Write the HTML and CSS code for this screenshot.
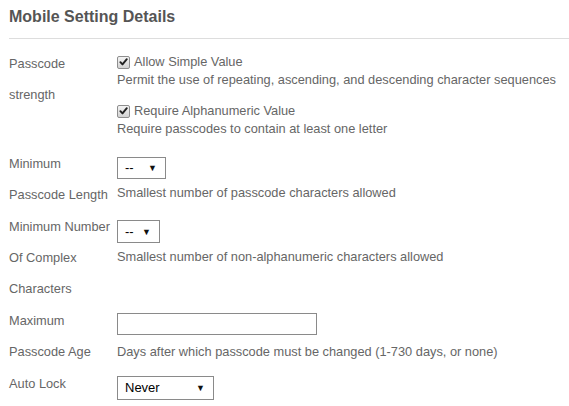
FILE: index.html
```html
<!DOCTYPE html>
<html>
<head>
<meta charset="utf-8">
<link rel="stylesheet" href="styles.css">
</head>
<body>
<div class="page">
  <h2 class="title">Mobile Setting Details</h2>
  <div class="rule"></div>
  <div class="form">
    <div class="label">Passcode<br>strength</div>
    <div class="field field-checks">
      <label class="check">
        <span class="box"><svg viewBox="0 0 12 12" width="12" height="12"><path d="M2.6 6.2 L4.9 8.6 L9.6 2.9" fill="none" stroke="#222" stroke-width="2.1" stroke-linecap="round" stroke-linejoin="round"/></svg></span>
        Allow Simple Value
      </label>
      <div class="desc">Permit the use of repeating, ascending, and descending character sequences</div>
      <label class="check check-second">
        <span class="box"><svg viewBox="0 0 12 12" width="12" height="12"><path d="M2.6 6.2 L4.9 8.6 L9.6 2.9" fill="none" stroke="#222" stroke-width="2.1" stroke-linecap="round" stroke-linejoin="round"/></svg></span>
        Require Alphanumeric Value
      </label>
      <div class="desc">Require passcodes to contain at least one letter</div>
    </div>

    <div class="label">Minimum<br>Passcode Length</div>
    <div class="field">
      <div class="select sel-min"><span>--</span><span class="arrow">▼</span></div>
      <div class="desc desc-after">Smallest number of passcode characters allowed</div>
    </div>

    <div class="label">Minimum Number<br>Of Complex<br>Characters</div>
    <div class="field">
      <div class="select sel-complex"><span>--</span><span class="arrow">▼</span></div>
      <div class="desc desc-after">Smallest number of non-alphanumeric characters allowed</div>
    </div>

    <div class="label">Maximum<br>Passcode Age</div>
    <div class="field field-tight">
      <div class="textbox"></div>
      <div class="desc desc-after2">Days after which passcode must be changed (1-730 days, or none)</div>
    </div>

    <div class="label">Auto Lock</div>
    <div class="field field-tight">
      <div class="select sel-lock"><span>Never</span><span class="arrow">▼</span></div>
    </div>
  </div>
</div>
</body>
</html>
```

FILE: styles.css
```css
html, body {
  margin: 0;
  padding: 0;
  background: #fff;
}
body {
  font-family: "Liberation Sans", Arial, sans-serif;
  font-size: 12.8px;
  color: #666;
  overflow: hidden;
}
.page {
  padding-left: 9px;
}
.title {
  margin: 0;
  padding-top: 7px;
  font-size: 16px;
  font-weight: bold;
  color: #555;
  line-height: 20px;
}
.rule {
  margin-top: 11px;
  border-top: 1px solid #ddd;
}
.form {
  margin-top: 9px;
  display: grid;
  grid-template-columns: 108px 1fr;
  row-gap: 1px;
}
.label {
  line-height: 31px;
  white-space: nowrap;
}
.field {
  padding-top: 9px;
  line-height: 18px;
}
.field-tight {
  padding-top: 8px;
}
.field-checks {
  padding-top: 5px;
  padding-bottom: 9px;
}
.check {
  display: flex;
  align-items: center;
  gap: 4px;
  height: 18px;
}
.check-second {
  margin-top: 13px;
}
.box {
  width: 11px;
  height: 11px;
  border: 1px solid #8e8e8e;
  border-radius: 2px;
  background: linear-gradient(#f4f4f4, #d2d2d2);
  display: flex;
  align-items: center;
  justify-content: center;
}
.box svg {
  display: block;
}
.desc {
  white-space: nowrap;
}
.desc-after {
  margin-top: 5px;
}
.desc-after2 {
  margin-top: 8px;
}
.select {
  position: relative;
  box-sizing: border-box;
  border: 1px solid #8a8a8a;
  background: #fff;
  color: #000;
  display: flex;
  align-items: center;
  padding-left: 7px;
  font-size: 13px;
}
.arrow {
  position: absolute;
  right: 8px;
  top: 50%;
  transform: translateY(-50%);
  font-size: 9px;
  line-height: 9px;
  color: #111;
}
.sel-min {
  width: 49px;
  height: 22px;
}
.sel-complex {
  width: 43px;
  height: 23px;
}
.sel-lock {
  width: 97px;
  height: 24px;
}
.textbox {
  box-sizing: border-box;
  width: 200px;
  height: 22px;
  border: 1px solid #8a8a8a;
  background: #fff;
}
```
